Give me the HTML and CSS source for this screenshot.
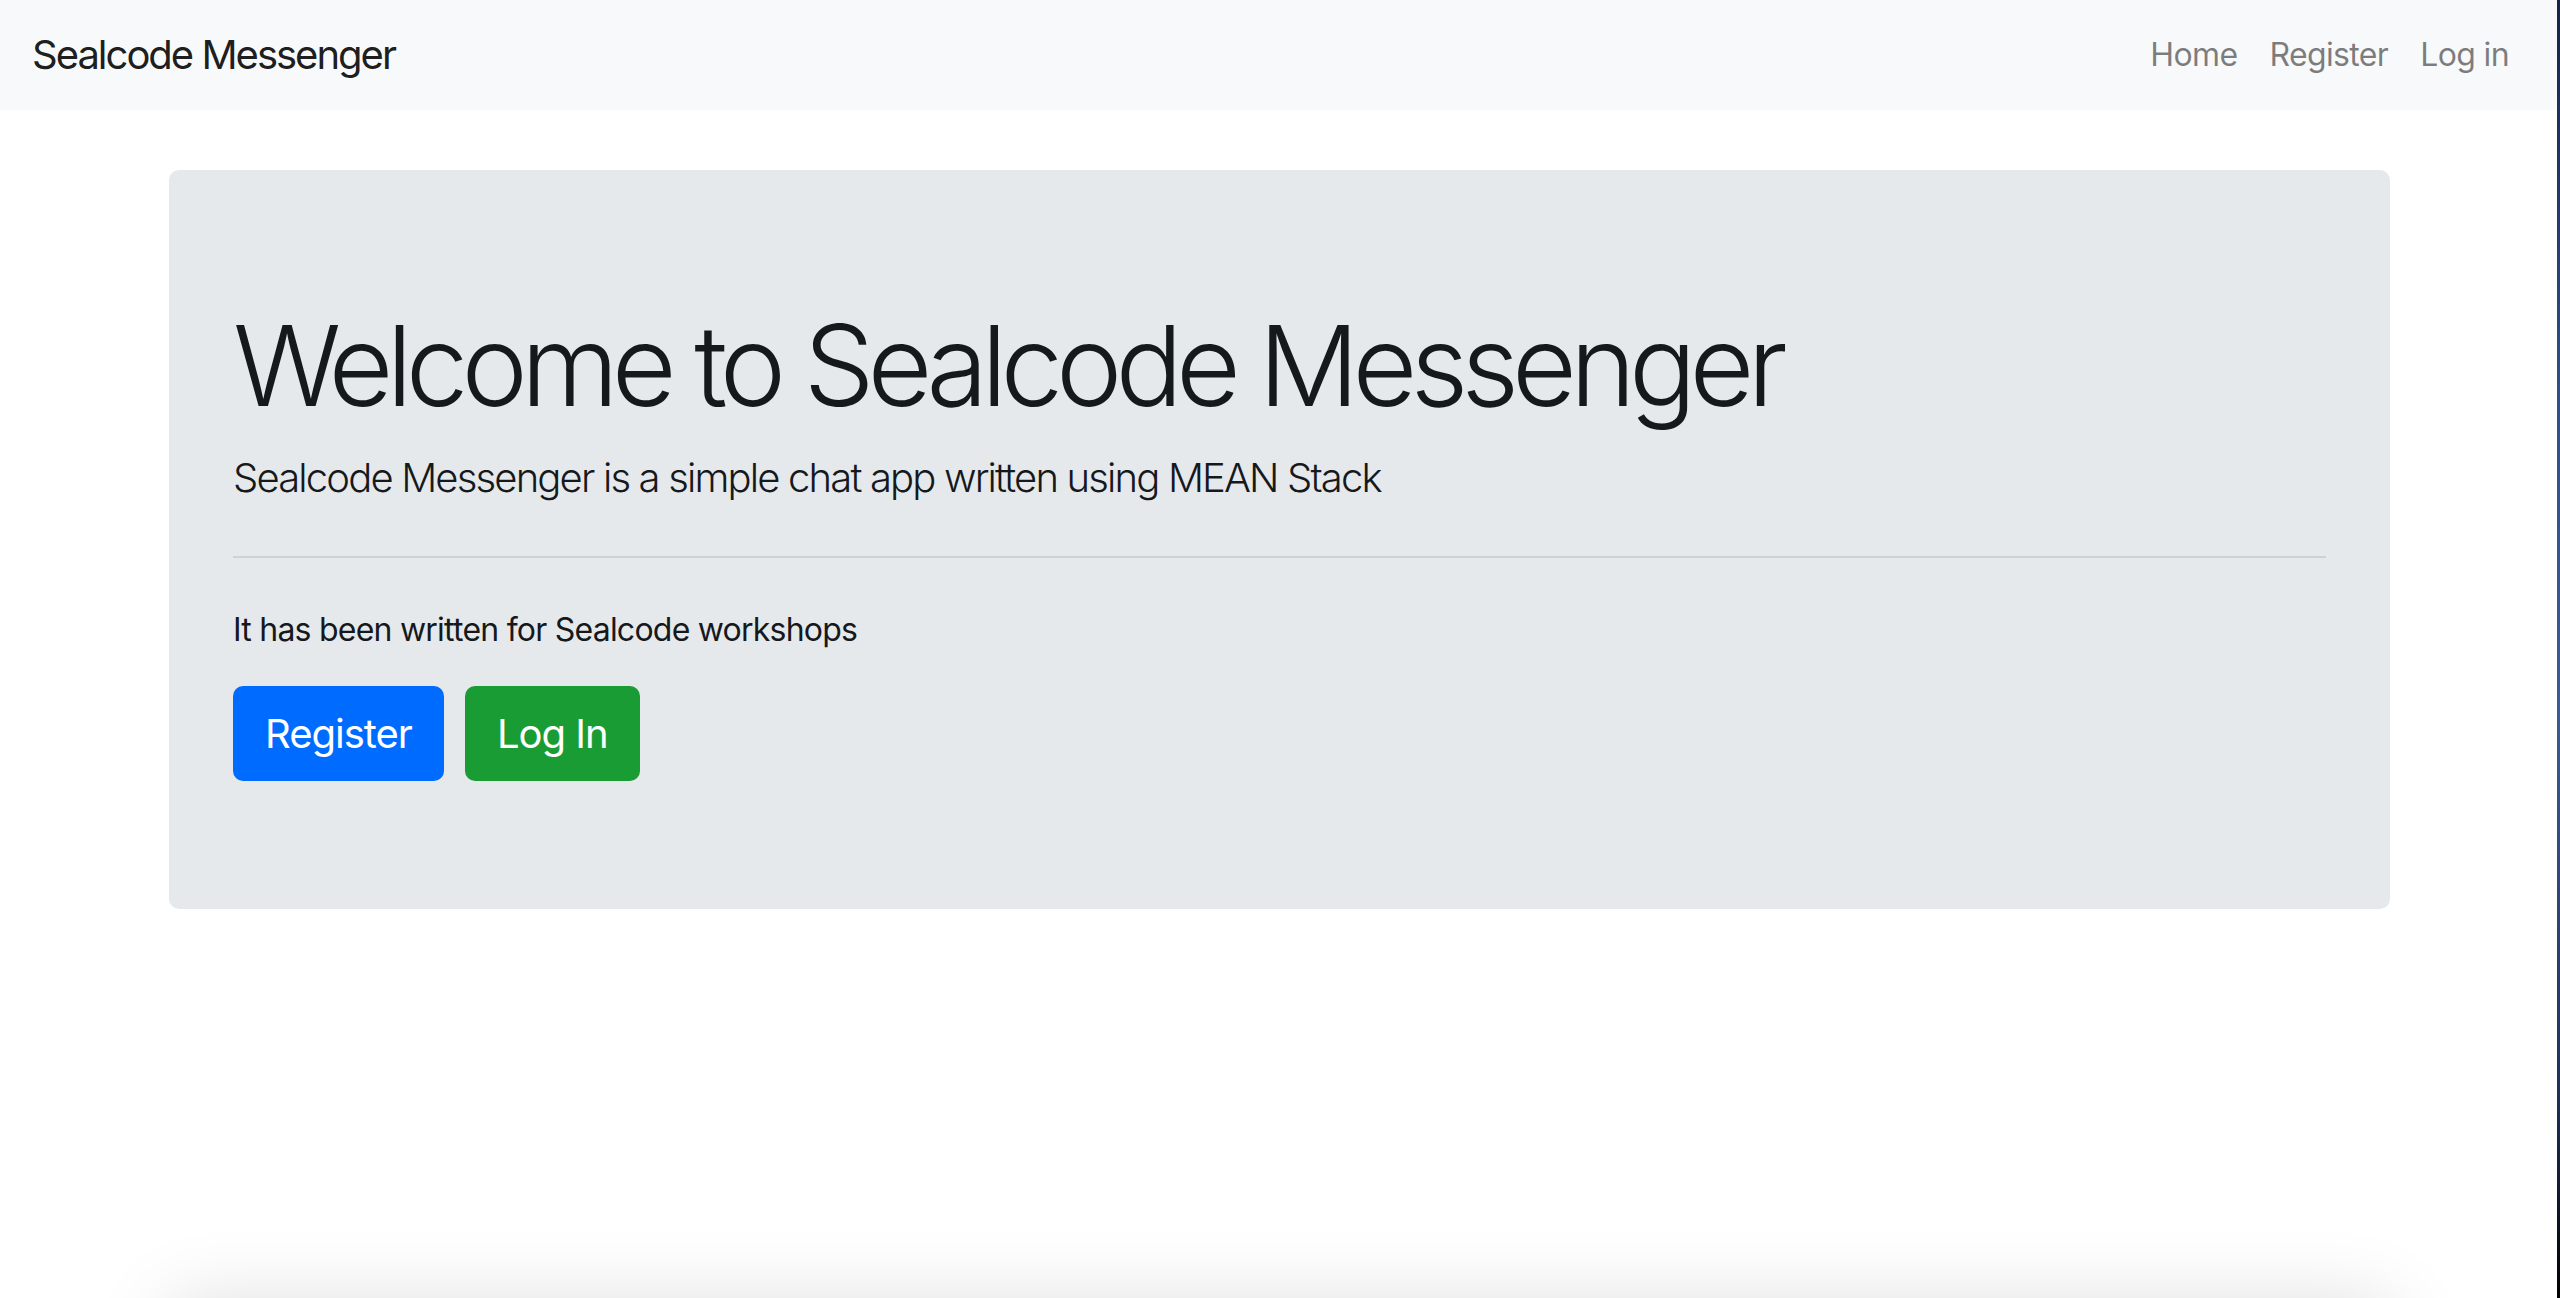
FILE: index.html
```html
<!DOCTYPE html>
<html lang="en">
<head>
<meta charset="utf-8">
<title>Sealcode Messenger</title>
<link rel="stylesheet" href="styles.css">
</head>
<body>
<div class="page">
  <nav class="navbar">
    <a class="brand" href="#">Sealcode Messenger</a>
    <ul class="nav">
      <li><a class="nav-link" href="#">Home</a></li>
      <li><a class="nav-link" href="#">Register</a></li>
      <li><a class="nav-link" href="#">Log in</a></li>
    </ul>
  </nav>
  <main class="container">
    <section class="jumbotron">
      <h1 class="display">Welcome to Sealcode Messenger</h1>
      <p class="lead">Sealcode Messenger is a simple chat app written using MEAN Stack</p>
      <hr class="divider">
      <p class="text">It has been written for Sealcode workshops</p>
      <div class="actions">
        <a class="btn btn-primary" href="#">Register</a>
        <a class="btn btn-success" href="#">Log In</a>
      </div>
    </section>
    <div class="card-below"></div>
  </main>
</div>
<div class="edge"></div>
</body>
</html>
```

FILE: styles.css
```css
html, body {
  margin: 0;
  padding: 0;
  height: 100%;
  overflow: hidden;
}
body {
  display: flex;
  background: #ffffff;
  font-family: Inter, "Noto Sans", "Liberation Sans", sans-serif;
  color: #212529;
}
.page {
  flex: 1;
  min-width: 0;
  background: #ffffff;
}
.edge {
  width: 3px;
  flex: none;
  background: linear-gradient(180deg, #14244a 0%, #2f4f86 30%, #3b5b92 55%, #1e2f55 85%, #000 100%);
}
.navbar {
  height: 110px;
  box-sizing: border-box;
  background: #f8f9fa;
  display: flex;
  align-items: center;
  justify-content: space-between;
  padding: 0 32px;
}
.brand {
  font-size: 40px;
  letter-spacing: -0.05em;
  color: rgba(0, 0, 0, 0.9);
  text-decoration: none;
  line-height: 60px;
}
.nav {
  list-style: none;
  margin: 0;
  padding: 0;
  display: flex;
}
.nav-link {
  display: block;
  padding: 0 16px;
  font-size: 32px;
  letter-spacing: -0.02em;
  line-height: 48px;
  color: rgba(0, 0, 0, 0.5);
  text-decoration: none;
}
.container {
  width: 2221px;
  margin: 0 auto;
  padding-top: 60px;
  transform: translateX(1px);
}
.jumbotron {
  background: #e6e9ec;
  border-radius: 10px;
  padding: 128px 64px;
}
.display {
  margin: 0 0 16px;
  font-size: 112px;
  font-weight: 300;
  line-height: 134px;
  letter-spacing: -0.062em;
  color: #16191c;
}
.lead {
  margin: 0;
  font-size: 40px;
  font-weight: 300;
  line-height: 60px;
  letter-spacing: -0.046em;
  color: #16191c;
}
.divider {
  margin: 48px 0;
  border: 0;
  border-top: 2px solid #cfd2d5;
}
.text {
  margin: 0 0 32px;
  font-size: 32px;
  line-height: 48px;
  letter-spacing: -0.024em;
  color: #16191c;
}
.actions {
  display: flex;
  gap: 21px;
}
.btn {
  display: inline-block;
  padding: 16px 32px;
  font-size: 40px;
  line-height: 63px;
  letter-spacing: -0.025em;
  border-radius: 10px;
  color: #ffffff;
  text-decoration: none;
}
.btn-primary {
  background: #006cff;
}
.btn-success {
  background: #1a9c35;
}
.card-below {
  margin-top: 395px;
  height: 400px;
  background: #ffffff;
  border-radius: 10px;
  box-shadow: 0 0 80px 0 rgba(0, 0, 0, 0.14);
}
```
